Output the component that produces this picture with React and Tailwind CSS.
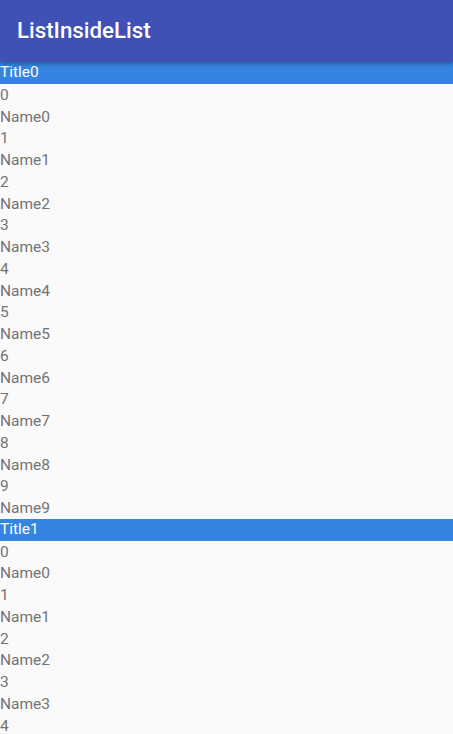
const sections = ['Title0', 'Title1']
const items = Array.from({ length: 10 }, (_, i) => i)

export default function App() {
  return (
    <div className="flex h-[734px] w-[453px] flex-col overflow-hidden bg-[#fafafa] font-['Roboto',sans-serif]">
      <header className="relative z-10 flex h-[62px] shrink-0 items-center bg-[#3f51b5] px-[17px] shadow-[0_2px_4px_rgba(0,0,0,0.3)]">
        <h1 className="text-[22.3px] font-medium text-white">ListInsideList</h1>
      </header>

      <div className="flex flex-col">
        {sections.map((title) => (
          <div key={title} className="flex flex-col">
            <div className="flex h-[21.75px] items-center bg-[#3584e1] text-[15.5px] leading-none text-white">
              {title}
            </div>
            {items.map((i) => (
              <div key={i} className="flex flex-col text-[15.5px] leading-none text-[#737373]">
                <div className="flex h-[21.75px] items-center pt-[2px]">{i}</div>
                <div className="flex h-[21.75px] items-center pt-[2px]">Name{i}</div>
              </div>
            ))}
          </div>
        ))}
      </div>
    </div>
  )
}
